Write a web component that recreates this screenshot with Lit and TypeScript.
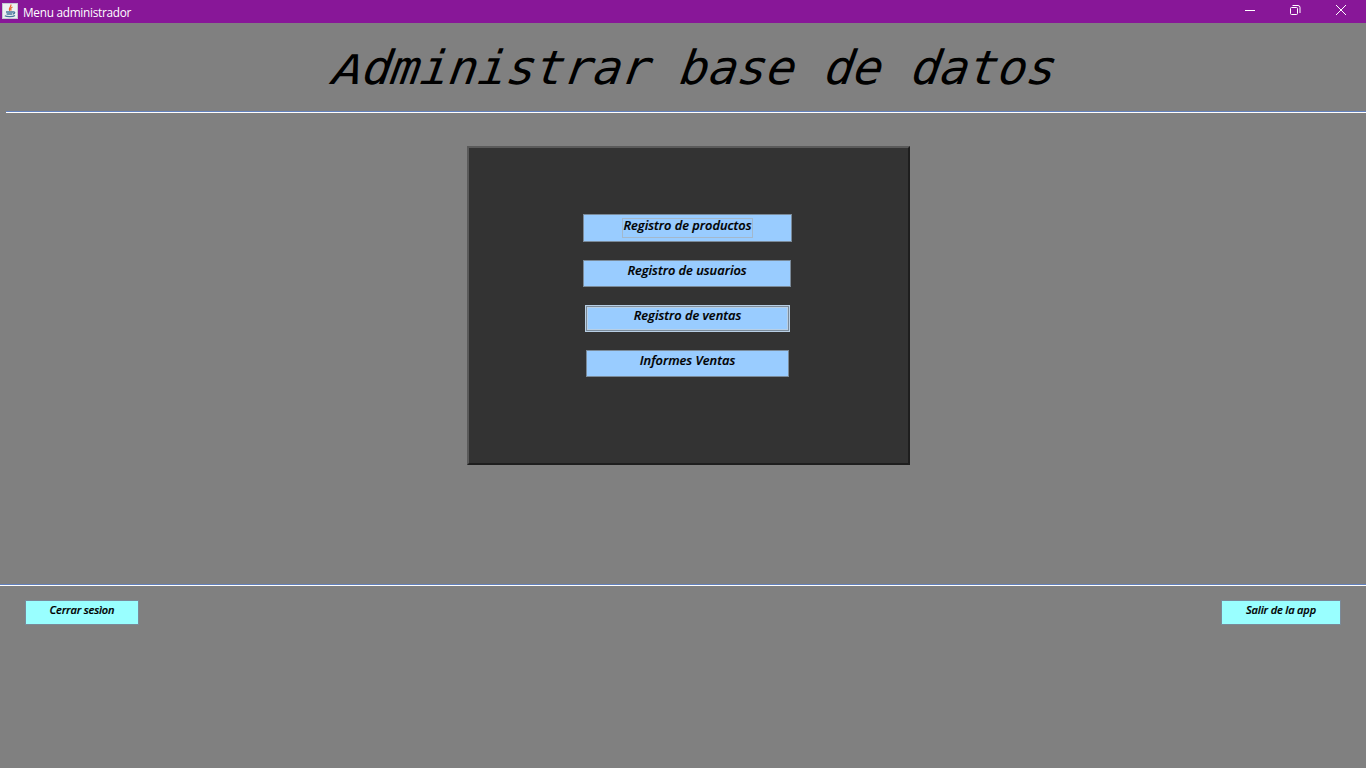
import { LitElement, html, css } from "lit";
import { customElement, property } from "lit/decorators.js";

@customElement("swing-button")
class SwingButton extends LitElement {
  @property() label = "";
  @property({ reflect: true }) state = "";
  static styles = css`
    :host { display: block; box-sizing: border-box; }
    .face {
      box-sizing: border-box; width: 100%; height: 100%; display: flex; justify-content: center; align-items: flex-start;
      background: #99ccff; border: 1px solid #7a8a99; color: #000;
      font: italic 600 12.8px/19px "Open Sans", sans-serif; white-space: nowrap; letter-spacing: 0.02px;
      -webkit-text-stroke: 0.2px #000;
    }
    .text { display: block; height: 19px; box-sizing: border-box; }
    :host([state="focus"]) .text { margin-top: 3px; height: 20px; line-height: 15px; outline: 1px solid #a3b8cc; outline-offset: -1px; padding: 0 1px; }
    :host([state="hover"]) .face { border-color: #b8cfe5; box-shadow: inset 0 0 0 1px #7a8a99, inset 0 0 0 2px #b8cfe5; }
    :host([state="light"]) .face { background: #99ffff; font-size: 11px; line-height: 18px; letter-spacing: -0.15px; }
  `;
  render() {
    return html`<div class="face"><span class="text">${this.label}</span></div>`;
  }
}

@customElement("app-root")
class AppRoot extends LitElement {
  static styles = css`
    :host { display: flex; flex-direction: column; width: 1366px; height: 768px; background: #808080; overflow: hidden; }
    .bar { display: flex; align-items: center; height: 23px; background: #881798; color: #fff; box-sizing: border-box; padding-left: 2px; flex: none; }
    .bar svg { display: block; flex: none; }
    .bar > svg { margin-bottom: 1px; }
    .name { font: 11.8px/24px "Open Sans", sans-serif; letter-spacing: -0.27px; margin-left: 5px; flex: 1; white-space: nowrap; }
    .controls { display: flex; width: 139px; height: 20px; align-self: flex-start; }
    .controls svg { width: 46px; height: 20px; }
    .title { height: 88px; box-sizing: border-box; padding: 14px 0 0 332px; flex: none; margin: 0;
      font: italic 400 48px/60px "DejaVu Sans Mono", monospace; color: #000; white-space: pre; }
    .slant { display: inline-block; transform: skewX(-9deg) scaleY(0.98); transform-origin: 0 47px; }
    .cap { display: inline-block; transform: scale(1.06, 0.87); transform-origin: 50% 46px; }
    .rule { height: 1px; border-top: 1px solid #6382bf; background: #fff; flex: none; }
    .rule.top { margin-left: 6px; }
    .center { height: 471px; flex: none; padding: 33px 0 0 467px; box-sizing: border-box; }
    .panel { width: 443px; height: 319px; box-sizing: border-box; background: #333; border: 2px solid; 
      border-color: #5a5a5a #1e1e1e #1e1e1e #5a5a5a; padding: 66px 0 0 114px; display: flex; flex-direction: column; }
    .productos { width: 209px; height: 28px; margin-bottom: 18px; }
    .usuarios { width: 208px; height: 27px; margin-bottom: 18px; }
    .ventas { width: 205px; height: 27px; margin: 0 0 18px 2px; }
    .informes { width: 203px; height: 27px; margin-left: 3px; }
    .foot { display: flex; justify-content: space-between; padding: 14px 25px 0; }
    .cerrar { width: 114px; height: 25px; }
    .salir { width: 120px; height: 25px; }
  `;
  render() {
    return html`
      <header class="bar">
        <svg width="16" height="16" viewBox="0 0 16 16">
          <rect width="16" height="16" rx="1" fill="#eef0f2" />
          <path d="M.5.5h15v15H.5z" fill="none" stroke="#c3cbd2" />
          <path d="M8.8 1.5C10 4 5.8 4.6 7.8 8M10.5 4C8.5 5 8.3 6 9.3 7.5" fill="none" stroke="#e8622c" stroke-width="1.2" />
          <path d="M4 9h7M4.6 11h5.8M11 9c2.4-.6 2 1.6 0 2M2.8 12.8c2 1.2 8 1.2 10.2-.3" fill="none" stroke="#47799d" stroke-width="1.3" />
        </svg>
        <span class="name">Menu administrador</span>
        <div class="controls">
          <svg viewBox="0 0 46 20"><path d="M18 10.5h10" stroke="#fff" /></svg>
          <svg viewBox="0 0 46 20" fill="none" stroke="#fff"><rect x="17.5" y="7.5" width="7" height="7" rx="1" /><path d="M19.5 5.5H25a2 2 0 0 1 2 2V13" /></svg>
          <svg viewBox="0 0 46 20"><path d="m17 5 10 10M27 5 17 15" stroke="#fff" /></svg>
        </div>
      </header>
      <h1 class="title"><span class="slant"><span class="cap">A</span>dministrar base de datos</span></h1>
      <div class="rule top"></div>
      <main class="center">
        <section class="panel">
          <swing-button class="productos" state="focus" label="Registro de productos"></swing-button>
          <swing-button class="usuarios" label="Registro de usuarios"></swing-button>
          <swing-button class="ventas" state="hover" label="Registro de ventas"></swing-button>
          <swing-button class="informes" label="Informes Ventas"></swing-button>
        </section>
      </main>
      <div class="rule"></div>
      <footer class="foot">
        <swing-button class="cerrar" state="light" label="Cerrar sesìon"></swing-button>
        <swing-button class="salir" state="light" label="Salir de la app"></swing-button>
      </footer>
    `;
  }
}
